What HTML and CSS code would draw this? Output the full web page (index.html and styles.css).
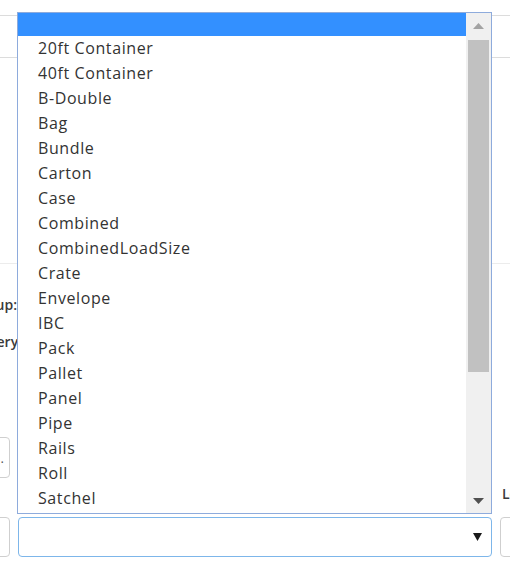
FILE: index.html
```html
<!DOCTYPE html>
<html>
<head>
<meta charset="utf-8">
<link rel="stylesheet" href="styles.css">
</head>
<body>
<div class="page">
  <div class="form">
    <div class="table-block"></div>
    <div class="section">
      <div class="label-col"><span class="label">Pickup:</span></div>
      <div class="label-col"><span class="label label-shift">Delivery:</span></div>
    </div>
    <div class="row input-row">
      <div class="cell-left"><div class="input input-dot"><span>.</span></div></div>
      <div class="cell-mid"></div>
      <div class="cell-right"></div>
    </div>
    <div class="row label-row">
      <div class="cell-left"></div>
      <div class="cell-mid"></div>
      <div class="cell-right"><span class="label">Length</span></div>
    </div>
    <div class="row bottom-row">
      <div class="cell-left"><div class="input"></div></div>
      <div class="cell-mid">
        <div class="select">
          <svg class="caret" width="9" height="8" viewBox="0 0 9 8"><polygon points="0,0 9,0 4.5,8" fill="#1a1a1a"/></svg>
        </div>
      </div>
      <div class="cell-right"><div class="input input-right"></div></div>
    </div>
  </div>

  <div class="dropdown">
    <div class="options">
      <div class="opt sel"></div>
      <div class="opt">20ft Container</div>
      <div class="opt">40ft Container</div>
      <div class="opt">B-Double</div>
      <div class="opt">Bag</div>
      <div class="opt">Bundle</div>
      <div class="opt">Carton</div>
      <div class="opt">Case</div>
      <div class="opt">Combined</div>
      <div class="opt">CombinedLoadSize</div>
      <div class="opt">Crate</div>
      <div class="opt">Envelope</div>
      <div class="opt">IBC</div>
      <div class="opt">Pack</div>
      <div class="opt">Pallet</div>
      <div class="opt">Panel</div>
      <div class="opt">Pipe</div>
      <div class="opt">Rails</div>
      <div class="opt">Roll</div>
      <div class="opt">Satchel</div>
    </div>
    <div class="scrollbar">
      <div class="sb-btn">
        <svg width="11" height="6" viewBox="0 0 11 6"><polygon points="0,6 11,6 5.5,0" fill="#a3a3a3"/></svg>
      </div>
      <div class="sb-track">
        <div class="sb-thumb"></div>
      </div>
      <div class="sb-btn">
        <svg width="11" height="6" viewBox="0 0 11 6"><polygon points="0,0 11,0 5.5,6" fill="#505050"/></svg>
      </div>
    </div>
  </div>
</div>
</body>
</html>
```

FILE: styles.css
```css
html, body {
  margin: 0;
  padding: 0;
  background: #fff;
}

.page {
  position: relative;
  width: 510px;
  height: 569px;
  overflow: hidden;
  font-family: "Open Sans", "Liberation Sans", sans-serif;
  color: #333;
}

.form {
  padding-top: 15px;
}

.table-block {
  height: 41px;
  border-top: 1px solid #dcdcdc;
  border-bottom: 1px solid #dcdcdc;
}

.section {
  margin-top: 205px;
  border-top: 1px solid #ececec;
  padding-top: 22px;
}

.label-col {
  width: 17px;
  height: 37px;
  display: flex;
  justify-content: flex-end;
  align-items: center;
  overflow: hidden;
  white-space: nowrap;
}

.label {
  font-size: 14px;
  font-weight: 600;
  color: #3a3a3a;
  white-space: nowrap;
}

.label-shift {
  margin-right: -5px;
}

.row {
  display: grid;
  grid-template-columns: 10px 474px 1fr;
  column-gap: 8px;
}

.input-row {
  margin-top: 77px;
  height: 41px;
}

.label-row {
  margin-top: 5px;
  height: 20px;
  align-items: center;
}

.cell-right {
  overflow: hidden;
  white-space: nowrap;
}

.label-row .cell-right {
  padding-left: 2px;
  line-height: 20px;
}

.bottom-row {
  margin-top: 14px;
  height: 40px;
}

.cell-left {
  overflow: hidden;
  height: 100%;
}

.input {
  box-sizing: border-box;
  height: 100%;
  margin-left: -40px;
  border: 1px solid #cfcfcf;
  border-radius: 4px;
  background: #fff;
}

.input-dot {
  display: flex;
  justify-content: flex-end;
  align-items: center;
  padding-right: 5px;
  font-size: 13px;
  color: #555;
}

.input-right {
  margin-left: 0;
  width: 60px;
}

.select {
  box-sizing: border-box;
  height: 40px;
  border: 1px solid #7db6ea;
  border-radius: 4px;
  background: #fff;
  display: flex;
  justify-content: flex-end;
  align-items: center;
  padding-right: 9px;
}

.caret {
  display: block;
}

.dropdown {
  position: absolute;
  left: 17px;
  top: 12px;
  width: 475px;
  height: 502px;
  box-sizing: border-box;
  border: 1px solid #8eabdc;
  background: #fff;
  display: flex;
  overflow: hidden;
}

.options {
  flex: 1;
  min-width: 0;
}

.opt {
  height: 25px;
  line-height: 25px;
  padding-left: 20px;
  font-size: 16px;
  letter-spacing: 0.6px;
  color: #333;
  white-space: nowrap;
}

.opt.sel {
  height: 23px;
  background: #3390ff;
}

.scrollbar {
  width: 25px;
  background: #f0f0f0;
  display: flex;
  flex-direction: column;
}

.sb-btn {
  height: 25px;
  display: flex;
  align-items: center;
  justify-content: center;
  flex: none;
}

.sb-btn svg {
  display: block;
}

.sb-track {
  flex: 1;
  padding: 2px 2px 0 2px;
}

.sb-thumb {
  height: 332px;
  background: #c1c1c1;
}
```
